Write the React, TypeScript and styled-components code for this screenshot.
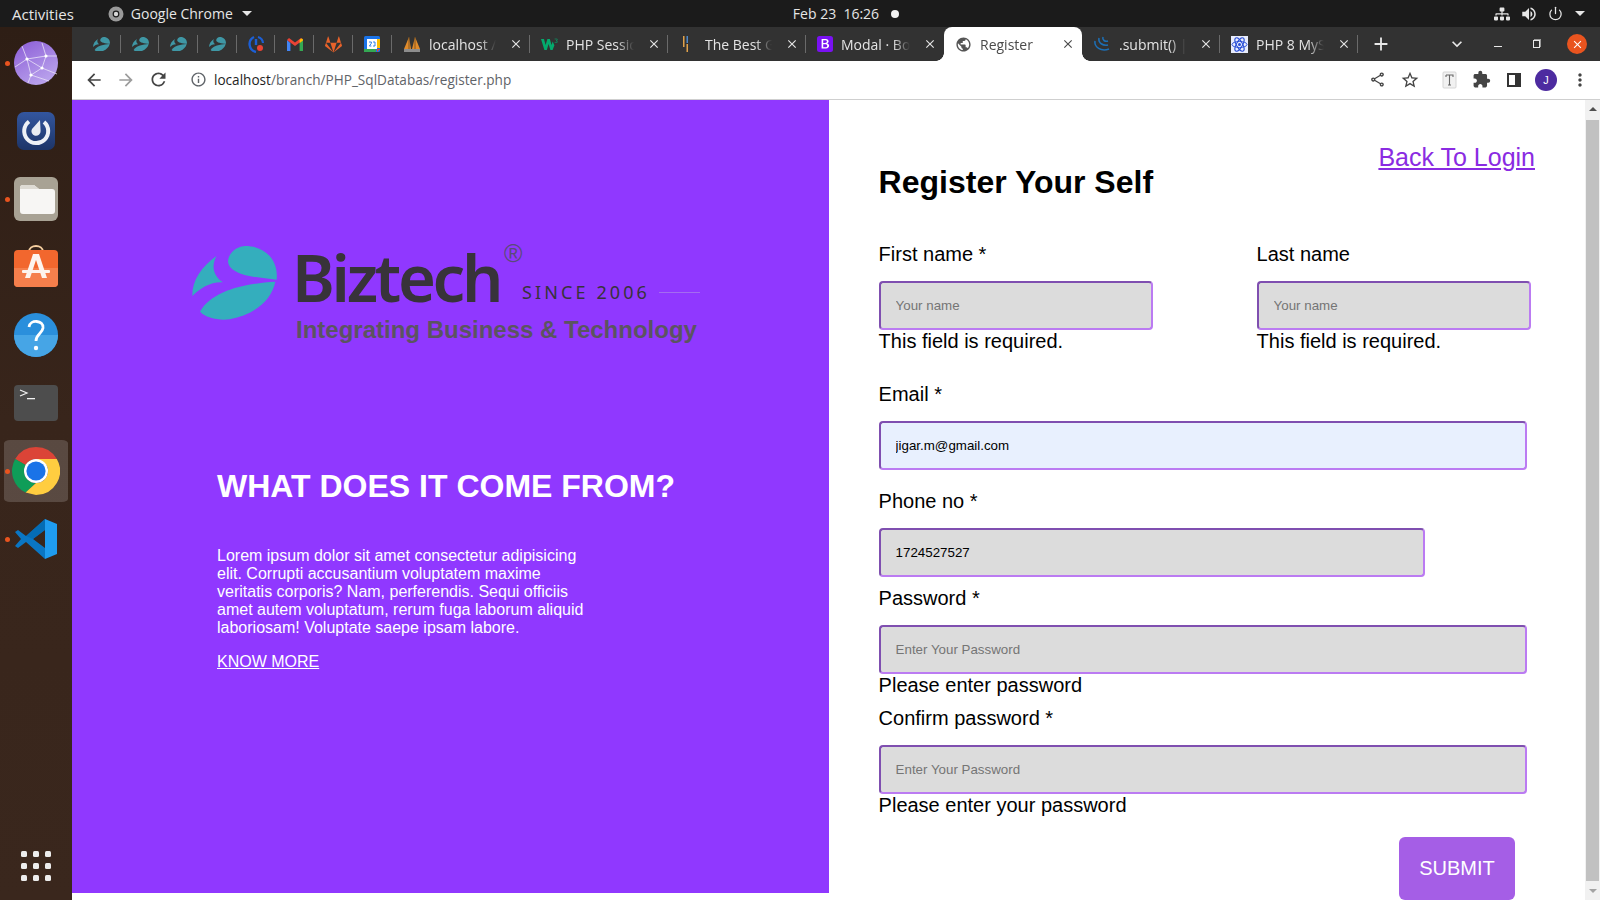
import type { ReactNode } from "react";
import styled, { createGlobalStyle } from "styled-components";
import {
  MdArrowBack,
  MdArrowForward,
  MdExtension,
  MdInfoOutline,
  MdMoreVert,
  MdOutlineShare,
  MdRefresh,
  MdStarBorder,
  MdVolumeUp,
  MdClose,
  MdAdd,
  MdExpandMore,
  MdPublic,
} from "react-icons/md";
import { FaSitemap, FaGitlab } from "react-icons/fa";
import { Power } from "lucide-react";

const GlobalStyle = createGlobalStyle`
  html, body {
    margin: 0;
    height: 100%;
    overflow: hidden;
  }
  * {
    box-sizing: border-box;
  }
`;

const Screen = styled.div`
  width: 1600px;
  height: 900px;
  display: flex;
  flex-direction: column;
  overflow: hidden;
  font-family: "Liberation Sans", Arial, sans-serif;
`;

const TopBar = styled.div`
  height: 27px;
  flex: none;
  background: #1b1b1b;
  color: #e6e6e6;
  font-family: "Open Sans", sans-serif;
  font-size: 14px;
  display: grid;
  grid-template-columns: 1fr auto 1fr;
  align-items: center;
  padding: 0 12px;
`;

const TopLeft = styled.div`
  display: flex;
  align-items: center;
`;

const Activities = styled.span`
  font-size: 15px;
`;

const AppMenu = styled.div`
  display: flex;
  align-items: center;
  gap: 7px;
  margin-left: 34px;
`;

const Caret = styled.span`
  width: 0;
  height: 0;
  margin-left: 2px;
  border-left: 5px solid transparent;
  border-right: 5px solid transparent;
  border-top: 5px solid #e6e6e6;
`;

const Clock = styled.div`
  display: flex;
  align-items: center;
  gap: 12px;
  margin-left: 92px;
`;

const ClockDot = styled.span`
  width: 8px;
  height: 8px;
  border-radius: 50%;
  background: #f2f2f2;
`;

const Tray = styled.div`
  display: flex;
  align-items: center;
  justify-content: flex-end;
  gap: 10px;
  padding-right: 3px;
`;

const Body = styled.div`
  flex: 1;
  display: flex;
  min-height: 0;
`;

const Dock = styled.div`
  width: 72px;
  flex: none;
  display: flex;
  flex-direction: column;
  align-items: center;
  padding: 2px 0 0;
  background: linear-gradient(180deg, #2e1e15 0%, #38251b 45%, #3a271d 100%);
`;

const DockSlot = styled.div<{ $active?: boolean }>`
  position: relative;
  width: 64px;
  height: 68px;
  flex: none;
  display: flex;
  align-items: center;
  justify-content: center;
  border-radius: 6px;
  border-top: 3px solid transparent;
  border-bottom: 3px solid transparent;
  background-clip: padding-box;
  background-color: ${(p) => (p.$active ? "rgba(255,255,255,0.17)" : "transparent")};
`;

const RunDot = styled.span`
  position: absolute;
  left: 1px;
  top: 50%;
  width: 5px;
  height: 5px;
  margin-top: -2px;
  border-radius: 50%;
  background: #e9541f;
`;

const AppGrid = styled.div`
  margin-top: auto;
  margin-bottom: 19px;
  display: grid;
  grid-template-columns: repeat(3, 6px);
  gap: 6px;
`;

const AppGridDot = styled.span`
  width: 6px;
  height: 6px;
  border-radius: 1.5px;
  background: #ececec;
`;

const Browser = styled.div`
  flex: 1;
  min-width: 0;
  display: flex;
  flex-direction: column;
`;

const TabStrip = styled.div`
  height: 34px;
  flex: none;
  display: flex;
  align-items: stretch;
  padding-left: 10px;
  background: #323232;
  color: #e4e4e4;
  font-family: "Open Sans", sans-serif;
  font-size: 14px;
`;

const PinnedTab = styled.div`
  width: 38.7px;
  flex: none;
  display: flex;
  align-items: center;
  justify-content: center;
  position: relative;
  &::after {
    content: "";
    position: absolute;
    right: 0;
    top: 8px;
    bottom: 8px;
    width: 1px;
    background: #6a6a6a;
  }
`;

const Tab = styled.div<{ $active?: boolean; $noSep?: boolean }>`
  width: 138px;
  flex: none;
  display: flex;
  align-items: center;
  gap: 8.5px;
  padding: 0 7px 0 11px;
  position: relative;
  color: ${(p) => (p.$active ? "#4a4a4a" : "#e4e4e4")};
  background: ${(p) => (p.$active ? "#ffffff" : "transparent")};
  border-radius: ${(p) => (p.$active ? "8px 8px 0 0" : "0")};
  &::after {
    content: "";
    position: absolute;
    right: 0;
    top: 8px;
    bottom: 8px;
    width: 1px;
    background: ${(p) => (p.$noSep ? "transparent" : "#6a6a6a")};
  }
`;

const TabCorner = styled.span<{ $side: "left" | "right" }>`
  position: absolute;
  bottom: 0;
  ${(p) => p.$side}: -8px;
  width: 8px;
  height: 8px;
  background: ${(p) =>
    `radial-gradient(circle at ${p.$side === "left" ? "0 0" : "100% 0"}, #323232 7.5px, #ffffff 8px)`};
`;

const TabTitle = styled.span`
  flex: 1;
  min-width: 0;
  margin-right: 4px;
  white-space: nowrap;
  overflow: hidden;
  -webkit-mask-image: linear-gradient(90deg, #000 76%, transparent 100%);
  mask-image: linear-gradient(90deg, #000 76%, transparent 100%);
`;

const StripControls = styled.div`
  flex: 1;
  display: flex;
  align-items: center;
  padding-left: 12px;
  color: #e8e8e8;
`;

const WindowButtons = styled.div`
  margin-left: auto;
  display: flex;
  align-items: center;
  gap: 27px;
  padding-right: 13px;
`;

const MinLine = styled.span`
  width: 8px;
  height: 1px;
  margin-top: 5px;
  background: #e8e8e8;
`;

const RestoreIcon = styled.span`
  width: 7px;
  height: 8px;
  margin-left: 4px;
  border: 1px solid #e8e8e8;
  box-shadow: 1px -1px 0 0 #9a9a9a;
`;

const CloseCircle = styled.span`
  width: 20px;
  height: 20px;
  border-radius: 50%;
  background: #e9541f;
  color: #fff;
  display: flex;
  align-items: center;
  justify-content: center;
`;

const Toolbar = styled.div`
  height: 39px;
  flex: none;
  display: flex;
  align-items: center;
  background: #ffffff;
  border-bottom: 1px solid #cfcfcf;
  color: #444;
  padding: 0 0 1px 6px;
`;

const NavButton = styled.span<{ $faded?: boolean }>`
  width: 32px;
  display: flex;
  justify-content: center;
  color: ${(p) => (p.$faded ? "#9c9c9c" : "#444")};
`;

const UrlBox = styled.div`
  width: 1246px;
  height: 32px;
  margin-left: 7px;
  padding: 0 7px 0 9px;
  display: flex;
  align-items: center;
  border-radius: 16px;
  background: #ffffff;
  font-family: "Open Sans", sans-serif;
  font-size: 13.6px;
  color: #5f6368;
`;

const UrlHost = styled.span`
  color: #1f1f1f;
`;

const UrlPath = styled.span`
  margin-left: 7px;
`;

const UrlActions = styled.div`
  margin-left: auto;
  display: flex;
  gap: 14px;
  align-items: center;
  color: #444;
`;

const ToolIcons = styled.div`
  display: flex;
  align-items: center;
  gap: 13px;
  margin-left: 14px;
  color: #444;
`;

const PanelGlyph = styled.span`
  width: 14px;
  height: 14px;
  margin-left: 3px;
  border: 2.5px solid #333;
  border-right-width: 6px;
`;

const Avatar = styled.span`
  width: 22px;
  height: 22px;
  margin-left: 1px;
  border-radius: 50%;
  background: #4d2ba0;
  color: #fff;
  font-size: 11px;
  display: flex;
  align-items: center;
  justify-content: center;
`;

const Viewport = styled.div`
  flex: 1;
  min-height: 0;
  display: flex;
  background: #fff;
`;

const Page = styled.div`
  flex: 1;
  min-width: 0;
  display: flex;
  align-items: flex-start;
  overflow: hidden;
`;

const Hero = styled.section`
  width: 757px;
  height: 793px;
  flex: none;
  background: #9038ff;
  color: #fff;
  padding: 146px 0 0 120px;
`;

const Logo = styled.div`
  display: flex;
  margin-bottom: 124px;
  gap: 19px;
`;

const LogoText = styled.div`
  display: flex;
  flex-direction: column;
`;

const LogoTop = styled.div`
  display: flex;
  align-items: flex-end;
  height: 68px;
  position: relative;
  color: #38333a;
`;

const Wordmark = styled.span`
  font-family: "Noto Sans", sans-serif;
  font-weight: 600;
  font-size: 65px;
  line-height: 68px;
  letter-spacing: -3.3px;
  margin: 0 0 3px -4px;
`;

const Since = styled.span`
  font-family: "Noto Sans", sans-serif;
  font-size: 18px;
  line-height: 20px;
  letter-spacing: 3.1px;
  white-space: nowrap;
  margin: 0 0 12px 22px;
`;

const SinceRule = styled.span`
  width: 41px;
  height: 1px;
  margin: 0 0 21px 9px;
  background: #a46cf0;
`;

const Registered = styled.span`
  position: absolute;
  left: 208px;
  top: -5px;
  font-size: 25px;
  line-height: 25px;
  color: #5b4a78;
`;

const LogoTagline = styled.div`
  font-size: 24px;
  line-height: 28px;
  font-weight: 700;
  color: #5b5460;
  white-space: nowrap;
  margin-top: 2px;
`;

const HeroTitle = styled.h1`
  margin: 0 0 42px 25px;
  font-size: 32px;
  line-height: 37px;
  font-weight: 700;
  white-space: nowrap;
`;

const HeroText = styled.p`
  margin: 0 0 16px 25px;
  width: 372px;
  font-size: 16px;
  line-height: 18px;
`;

const KnowMore = styled.a`
  margin-left: 25px;
  font-size: 16px;
  color: #fff;
  text-decoration: underline;
`;

const FormPanel = styled.section`
  flex: 1;
  min-width: 0;
  padding: 43px 50px 0 49.6px;
`;

const FormHeader = styled.div`
  display: flex;
  justify-content: space-between;
  align-items: flex-start;
  margin-bottom: 42px;
`;

const FormTitle = styled.h2`
  margin: 21px 0 0;
  font-size: 32px;
  line-height: 37px;
  font-weight: 700;
  color: #000;
`;

const BackLink = styled.a`
  font-size: 25px;
  line-height: 29px;
  color: #8a2be2;
  text-decoration: underline;
`;

const NameRow = styled.div`
  display: grid;
  grid-template-columns: 274px 274px;
  gap: 104px;
  margin-bottom: 30px;
`;

const Field = styled.div<{ $gap?: number }>`
  margin-bottom: ${(p) => p.$gap ?? 0}px;
`;

const Label = styled.label`
  display: block;
  font-size: 20px;
  line-height: 23px;
  margin-bottom: 15px;
  color: #000;
`;

const Input = styled.input<{ $w: number; $autofilled?: boolean }>`
  display: block;
  width: ${(p) => p.$w}px;
  height: 49px;
  padding: 0 15px;
  border-width: 2px;
  border-style: solid;
  border-color: #7f4fb0 #bb7bf2 #bb7bf2 #7f4fb0;
  border-radius: 4px;
  outline: none;
  background: ${(p) => (p.$autofilled ? "#e8f0fe" : "#dcdcdc")};
  color: #000;
  font-family: "Liberation Sans", Arial, sans-serif;
  font-size: 13.33px;
  &::placeholder {
    color: #757575;
  }
`;

const ErrorText = styled.div`
  font-size: 20px;
  line-height: 23px;
  color: #000;
`;

const SubmitRow = styled.div`
  display: flex;
  justify-content: flex-end;
  padding-right: 20px;
  margin-top: 20px;
`;

const SubmitButton = styled.button`
  width: 116px;
  height: 63px;
  border: none;
  border-radius: 6px;
  background: #a55ee6;
  color: #fff;
  font-family: "Liberation Sans", Arial, sans-serif;
  font-size: 20px;
`;

const Scrollbar = styled.div`
  width: 15px;
  flex: none;
  display: flex;
  flex-direction: column;
  align-items: center;
  background: #f1f1f1;
`;

const ScrollArrow = styled.span<{ $down?: boolean }>`
  flex: none;
  width: 0;
  height: 0;
  margin: 7px 0;
  border-left: 4px solid transparent;
  border-right: 4px solid transparent;
  ${(p) =>
    p.$down
      ? "border-top: 4px solid #a3a3a3;"
      : "border-bottom: 4px solid #505050;"}
`;

const ScrollThumb = styled.div`
  flex: 1;
  width: 100%;
  background: #c1c1c1;
  margin-top: 2px;
  margin-bottom: 1px;
  border: 1px solid #f1f1f1;
  border-width: 0 1px;
`;

/* drawings */

const BizMark = ({ size, color = "#34aebd" }: { size: number; color?: string }) => (
  <svg
    width={size}
    height={size * 0.87}
    viewBox="62 78 243 222"
    preserveAspectRatio="none"
    style={{ flex: "none" }}
  >
    <path
      fill={color}
      d="M304 179C240 172 170 165 165 125C165 100 190 78 215 78C270 78 310 120 304 179Z"
    />
    <path
      fill={color}
      d="M300 185C220 190 120 210 85 275C100 295 140 302 170 298C240 285 290 240 300 185Z"
    />
    <path
      fill={color}
      d="M132 108C90 140 62 180 63 228C85 205 115 185 150 187C125 170 115 140 132 108Z"
    />
  </svg>
);

const GlobeIcon = () => (
  <svg width="44" height="44" viewBox="0 0 44 44">
    <defs>
      <linearGradient id="globe" x1="0" y1="0" x2="0.6" y2="1">
        <stop offset="0" stopColor="#8a5bd6" />
        <stop offset="1" stopColor="#b9a2ec" />
      </linearGradient>
    </defs>
    <circle cx="22" cy="22" r="22" fill="url(#globe)" />
    <g stroke="#e9e2f8" strokeWidth="0.8" fill="none">
      <path d="M1 26L13 18L32 15L43 15M13 18L28 27L43 33M13 18L17 34L28 27L32 15L28 2M17 34L14 42M17 34L35 40M13 18L8 5" />
    </g>
    <g fill="#fff">
      <circle cx="13" cy="18" r="1.6" />
      <circle cx="32" cy="15" r="1.6" />
      <circle cx="28" cy="27" r="1.6" />
      <circle cx="17" cy="34" r="1.6" />
    </g>
  </svg>
);

const MattermostIcon = () => (
  <svg width="38" height="38" viewBox="0 0 38 38">
    <defs>
      <linearGradient id="mm" x1="0" y1="0" x2="0" y2="1">
        <stop offset="0" stopColor="#33569f" />
        <stop offset="1" stopColor="#1d3568" />
      </linearGradient>
    </defs>
    <rect width="38" height="38" rx="7" fill="url(#mm)" />
    <path
      fill="none"
      stroke="#eef1f6"
      strokeWidth="4"
      d="M12 9.5A12 12 0 1 0 27 10"
    />
    <path fill="#e8ecf2" d="M23 8L23.6 19A4.6 4.6 0 1 1 15 17Z" />
  </svg>
);

const FilesIcon = () => (
  <svg width="44" height="44" viewBox="0 0 44 44">
    <rect width="44" height="44" rx="6" fill="#a8a294" />
    <path
      fill="#f7f6f4"
      d="M6 11a3 3 0 0 1 3-3h11l5 4h13a3 3 0 0 1 3 3v19a3 3 0 0 1-3 3H9a3 3 0 0 1-3-3Z"
    />
    <path fill="#dedbd4" d="M6 11a3 3 0 0 1 3-3h11l5 4H6Z" />
  </svg>
);

const SoftwareIcon = () => (
  <svg width="44" height="44" viewBox="0 0 44 44">
    <path d="M15 7C15 -1 29 -1 29 7" fill="none" stroke="#f6cfa0" strokeWidth="2" />
    <rect y="5" width="44" height="37" rx="4" fill="#f2672e" />
    <path d="M0 23h44v15a4 4 0 0 1-4 4H4a4 4 0 0 1-4-4Z" fill="#f57f4c" />
    <g fill="#fdf4ee">
      <path d="M19 9h6l8 24h-5l-6-18-6 18h-5Z" />
      <rect x="8" y="25" width="28" height="3" rx="1" />
    </g>
  </svg>
);

const HelpIcon = () => (
  <svg width="44" height="44" viewBox="0 0 44 44">
    <circle cx="22" cy="22" r="22" fill="#2a8fdc" />
    <path d="M0 22A22 22 0 0 0 44 22Z" fill="#46a5e6" />
    <path
      d="M15 14C16 6 30 7 29 15C28 21 22 21 22 28"
      fill="none"
      stroke="#fff"
      strokeWidth="2.8"
    />
    <circle cx="22" cy="35" r="2.2" fill="#fff" />
  </svg>
);

const TerminalIcon = () => (
  <svg width="44" height="36" viewBox="0 0 44 36">
    <rect width="44" height="36" rx="4" fill="#4d4d4d" />
    <path d="M6 5l7 3-7 3" fill="none" stroke="#f2f2f2" strokeWidth="1.2" />
    <rect x="13" y="13" width="8" height="1.3" fill="#f2f2f2" />
  </svg>
);

const ChromeIcon = () => (
  <svg width="48" height="48" viewBox="0 0 48 48">
    <path fill="#db4437" d="M24 0A24 24 0 0 1 44.8 12H24A12 12 0 0 0 13.6 18L3.2 12A24 24 0 0 1 24 0Z" />
    <path fill="#0f9d58" d="M3.2 12L13.6 18A12 12 0 0 0 24 36L13.6 45.6A24 24 0 0 1 3.2 12Z" />
    <path fill="#ffcd40" d="M44.8 12A24 24 0 0 1 24 48L13.6 45.6 24 36A12 12 0 0 0 34.4 18L24 12Z" />
    <circle cx="24" cy="24" r="12" fill="#fff" />
    <circle cx="24" cy="24" r="9.6" fill="#1a73e8" />
  </svg>
);

const VsCodeIcon = () => (
  <svg width="44" height="44" viewBox="0 0 44 44">
    <path fill="#0a76c4" d="M4 13L1 15 7 22 1 29 4 31 12 25 31 42V31L19 22 31 13V2L12 19Z" />
    <path fill="#1f9cf0" d="M31 2l12 5v30l-12 5Z" />
    <path fill="#0065a9" d="M31 2v11L19 22l-7-3Z" opacity="0.55" />
  </svg>
);

const ChromeMiniIcon = () => (
  <svg width="16" height="16" viewBox="0 0 16 16">
    <circle cx="8" cy="8" r="7.5" fill="#9a9a9a" />
    <circle cx="8" cy="8" r="3.4" fill="#1b1b1b" />
    <circle cx="8" cy="8" r="2.2" fill="#d8d8d8" />
  </svg>
);

const RadarIcon = () => (
  <svg width="18" height="18" viewBox="0 0 18 18">
    <path d="M7 2A8 8 0 0 0 9 17" fill="none" stroke="#1c5fd6" strokeWidth="2.4" />
    <path d="M11 2A7 7 0 0 1 16 8" fill="none" stroke="#1c5fd6" strokeWidth="2.2" />
    <path d="M9 4v6" stroke="#1c5fd6" strokeWidth="2.4" />
    <circle cx="13" cy="13" r="3" fill="#ea4335" />
  </svg>
);

const GmailIcon = () => (
  <svg width="16" height="13" viewBox="0 0 16 13">
    <path d="M0 2v11h3.4V5Z" fill="#4285f4" />
    <path d="M12.6 5v8H16V2Z" fill="#34a853" />
    <path d="M0 2l8 6 8-6-2-2-6 4.5L2 0Z" fill="#ea4335" />
    <path d="M12.6 2.5v2.7L16 2.4c0-2-1.6-2.8-3.4-.4Z" fill="#fbbc04" />
  </svg>
);

const CalendarIcon = () => (
  <svg width="16" height="16" viewBox="0 0 16 16">
    <rect width="16" height="16" rx="1.5" fill="#1a73e8" />
    <rect x="3" y="3" width="10" height="10" fill="#fff" />
    <rect y="13" width="12" height="3" fill="#34a853" />
    <rect x="13" y="3" width="3" height="9" fill="#fbbc04" />
    <path d="M13 13h3l-3 3Z" fill="#ea4335" />
    <path d="M5 6h2.4v1.2L5.4 10h2M9 6h2v4H9" fill="none" stroke="#1a73e8" strokeWidth="0.9" />
  </svg>
);

const PmaIcon = () => (
  <svg width="18" height="18" viewBox="0 0 18 18">
    <path d="M1 14L6 2l2 12Z" fill="#e08b2b" />
    <path d="M9 14l3-12 5 12Z" fill="#e08b2b" />
    <path d="M6 2v12M12 2v12" stroke="#6d4a1e" strokeWidth="0.8" />
    <rect x="1" y="14" width="16" height="3" fill="#8d8d8d" />
  </svg>
);

const W3Icon = () => (
  <svg width="17" height="13" viewBox="0 0 17 13">
    <path d="M0 1h3l1.6 6L6.4 1h2.4l1.8 6 1-3.4 1.8 3.6L11.6 12H9.4L7.6 6 5.8 12H3.4Z" fill="#04aa6d" />
    <path d="M13.6 1h2.6v.8l-1 1h1v1.6h-2.6" fill="none" stroke="#04aa6d" strokeWidth="0.6" />
  </svg>
);

const StripesIcon = () => (
  <svg width="18" height="18" viewBox="0 0 18 18">
    <rect x="4" y="1" width="1.5" height="11" fill="#e0a14b" />
    <rect x="7.5" y="1" width="1.5" height="7" fill="#4e88c7" />
    <rect x="7.5" y="9" width="1.5" height="8" fill="#e0a14b" />
  </svg>
);

const BootstrapIcon = () => (
  <svg width="16" height="16" viewBox="0 0 16 16">
    <rect width="16" height="16" rx="2.5" fill="#7a11f3" />
    <path
      fill="#fff"
      fillRule="evenodd"
      d="M4.6 3h4.2c1.8 0 2.8 1 2.8 2.3 0 1-.6 1.8-1.5 2.1 1.2.2 2 1.100 2 2.400 0 1.500-1.200 2.600-3.100 2.600H4.600ZM6.200 4.300v2.600h1.900c1 0 1.800-.3 1.800-1.300 0-.9-.7-1.300-1.600-1.300ZM6.200 8.200v3h2.200c1.100 0 1.800-.5 1.800-1.500s-.8-1.500-2-1.500Z"
    />
  </svg>
);

const JqueryIcon = () => (
  <svg width="18" height="18" viewBox="0 0 18 18" fill="none" stroke="#1d6fb5" strokeWidth="1.6">
    <path d="M2 6c-1 6 6 11 14 8" />
    <path d="M6 3c-1 5 4 8 9 7" />
    <path d="M10 2c-1 3 2 5 5 4" />
  </svg>
);

const ReactDocIcon = () => (
  <svg width="17" height="17" viewBox="0 0 17 17">
    <rect width="17" height="17" fill="#e8ecfb" />
    <g fill="none" stroke="#2a4fd7" strokeWidth="1">
      <ellipse cx="8.5" cy="8.500" rx="7.500" ry="3" />
      <ellipse cx="8.5" cy="8.500" rx="7.500" ry="3" transform="rotate(60 8.500 8.500)" />
      <ellipse cx="8.5" cy="8.500" rx="7.500" ry="3" transform="rotate(120 8.500 8.500)" />
    </g>
    <circle cx="8.500" cy="8.500" r="1.500" fill="#2a4fd7" />
  </svg>
);

const TextExtIcon = () => (
  <svg width="18" height="18" viewBox="0 0 18 18">
    <rect x="2" y="1" width="13" height="16" rx="1" fill="#f1f1f1" stroke="#d5d5d5" />
    <path d="M5 4h7v2M8.500 4v10M7 14h3M5 4v2" fill="none" stroke="#666" strokeWidth="1.100" />
  </svg>
);

const pinnedIcons: ReactNode[] = [
  <BizMark key="a" size={17} color="#3f97a5" />,
  <BizMark key="b" size={17} color="#3f97a5" />,
  <BizMark key="c" size={17} color="#3f97a5" />,
  <BizMark key="d" size={17} color="#3f97a5" />,
  <RadarIcon key="e" />,
  <GmailIcon key="f" />,
  <FaGitlab key="g" size={17} color="#e8622a" />,
  <CalendarIcon key="h" />,
];

type TabInfo = { title: string; icon: ReactNode; active?: boolean; noSep?: boolean };

const tabs: TabInfo[] = [
  { title: "localhost / 127", icon: <PmaIcon /> },
  { title: "PHP Session", icon: <W3Icon /> },
  { title: "The Best Guide", icon: <StripesIcon /> },
  { title: "Modal · Bootstrap", icon: <BootstrapIcon />, noSep: true },
  { title: "Register", icon: <MdPublic size={17} color="#555" />, active: true, noSep: true },
  { title: ".submit() | jQuery", icon: <JqueryIcon /> },
  { title: "PHP 8 MySQL", icon: <ReactDocIcon /> },
];

const dockApps: { icon: ReactNode; running?: boolean; active?: boolean }[] = [
  { icon: <GlobeIcon />, running: true },
  { icon: <MattermostIcon /> },
  { icon: <FilesIcon />, running: true },
  { icon: <SoftwareIcon /> },
  { icon: <HelpIcon /> },
  { icon: <TerminalIcon /> },
  { icon: <ChromeIcon />, running: true, active: true },
  { icon: <VsCodeIcon />, running: true },
];

function App() {
  return (
    <Screen>
      <GlobalStyle />
      <TopBar>
        <TopLeft>
          <Activities>Activities</Activities>
          <AppMenu>
            <ChromeMiniIcon />
            <span>Google Chrome</span>
            <Caret />
          </AppMenu>
        </TopLeft>
        <Clock>
          <span>Feb 23&nbsp; 16:26</span>
          <ClockDot />
        </Clock>
        <Tray>
          <FaSitemap size={16} />
          <MdVolumeUp size={18} />
          <Power size={15} />
          <Caret />
        </Tray>
      </TopBar>
      <Body>
        <Dock>
          {dockApps.map((app, i) => (
            <DockSlot key={i} $active={app.active}>
              {app.running && <RunDot />}
              {app.icon}
            </DockSlot>
          ))}
          <AppGrid>
            {Array.from({ length: 9 }).map((_, i) => (
              <AppGridDot key={i} />
            ))}
          </AppGrid>
        </Dock>
        <Browser>
          <TabStrip>
            {pinnedIcons.map((icon, i) => (
              <PinnedTab key={i}>{icon}</PinnedTab>
            ))}
            {tabs.map((tab) => (
              <Tab key={tab.title} $active={tab.active} $noSep={tab.noSep}>
                {tab.active && <TabCorner $side="left" />}
                {tab.icon}
                <TabTitle>{tab.title}</TabTitle>
                <MdClose size={14} />
                {tab.active && <TabCorner $side="right" />}
              </Tab>
            ))}
            <StripControls>
              <MdAdd size={22} />
              <WindowButtons>
                <MdExpandMore size={20} />
                <MinLine />
                <RestoreIcon />
                <CloseCircle>
                  <MdClose size={13} />
                </CloseCircle>
              </WindowButtons>
            </StripControls>
          </TabStrip>
          <Toolbar>
            <NavButton>
              <MdArrowBack size={20} />
            </NavButton>
            <NavButton $faded>
              <MdArrowForward size={20} />
            </NavButton>
            <NavButton>
              <MdRefresh size={21} />
            </NavButton>
            <UrlBox>
              <MdInfoOutline size={17} />
              <UrlPath>
                <UrlHost>localhost</UrlHost>/branch/PHP_SqlDatabas/register.php
              </UrlPath>
              <UrlActions>
                <MdOutlineShare size={17} />
                <MdStarBorder size={20} />
              </UrlActions>
            </UrlBox>
            <ToolIcons>
              <TextExtIcon />
              <MdExtension size={19} />
              <PanelGlyph />
              <Avatar>J</Avatar>
              <MdMoreVert size={20} />
            </ToolIcons>
          </Toolbar>
          <Viewport>
            <Page>
              <Hero>
                <Logo>
                  <BizMark size={85} />
                  <LogoText>
                    <LogoTop>
                      <Wordmark>Biztech</Wordmark>
                      <Registered>®</Registered>
                      <Since>SINCE 2006</Since>
                      <SinceRule />
                    </LogoTop>
                    <LogoTagline>Integrating Business &amp; Technology</LogoTagline>
                  </LogoText>
                </Logo>
                <HeroTitle>WHAT DOES IT COME FROM?</HeroTitle>
                <HeroText>
                  Lorem ipsum dolor sit amet consectetur adipisicing elit. Corrupti accusantium
                  voluptatem maxime veritatis corporis? Nam, perferendis. Sequi officiis amet autem
                  voluptatum, rerum fuga laborum aliquid laboriosam! Voluptate saepe ipsam labore.
                </HeroText>
                <KnowMore href="#">KNOW MORE</KnowMore>
              </Hero>
              <FormPanel>
                <FormHeader>
                  <FormTitle>Register Your Self</FormTitle>
                  <BackLink href="#">Back To Login</BackLink>
                </FormHeader>
                <NameRow>
                  <div>
                    <Label>First name *</Label>
                    <Input $w={274} placeholder="Your name" />
                    <ErrorText>This field is required.</ErrorText>
                  </div>
                  <div>
                    <Label>Last name</Label>
                    <Input $w={274} placeholder="Your name" />
                    <ErrorText>This field is required.</ErrorText>
                  </div>
                </NameRow>
                <Field $gap={20}>
                  <Label>Email *</Label>
                  <Input $w={648} $autofilled defaultValue="jigar.m@gmail.com" />
                </Field>
                <Field $gap={10}>
                  <Label>Phone no *</Label>
                  <Input $w={546} defaultValue="1724527527" />
                </Field>
                <Field $gap={10}>
                  <Label>Password *</Label>
                  <Input $w={648} type="password" placeholder="Enter Your Password" />
                  <ErrorText>Please enter password</ErrorText>
                </Field>
                <Field>
                  <Label>Confirm password *</Label>
                  <Input $w={648} type="password" placeholder="Enter Your Password" />
                  <ErrorText>Please enter your password</ErrorText>
                </Field>
                <SubmitRow>
                  <SubmitButton>SUBMIT</SubmitButton>
                </SubmitRow>
              </FormPanel>
            </Page>
            <Scrollbar>
              <ScrollArrow />
              <ScrollThumb />
              <ScrollArrow $down />
            </Scrollbar>
          </Viewport>
        </Browser>
      </Body>
    </Screen>
  );
}

export default App;
